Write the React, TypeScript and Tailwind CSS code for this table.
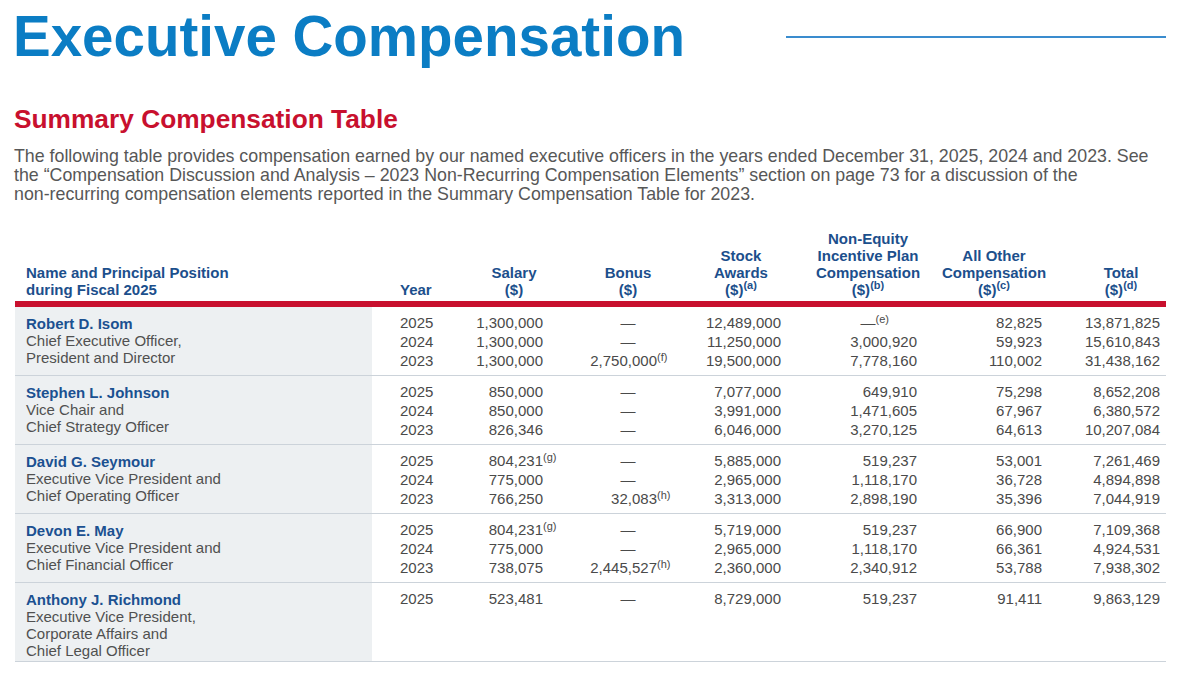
import * as React from "react";

type Val = { v: string; sup?: string };

type Exec = {
  name: string;
  title: string[];
  rows: Val[][];
};

const d = (v: string, sup?: string): Val => ({ v, sup });

const execs: Exec[] = [
  {
    name: "Robert D. Isom",
    title: ["Chief Executive Officer,", "President and Director"],
    rows: [
      [d("2025"), d("1,300,000"), d("—"), d("12,489,000"), d("—", "e"), d("82,825"), d("13,871,825")],
      [d("2024"), d("1,300,000"), d("—"), d("11,250,000"), d("3,000,920"), d("59,923"), d("15,610,843")],
      [d("2023"), d("1,300,000"), d("2,750,000", "f"), d("19,500,000"), d("7,778,160"), d("110,002"), d("31,438,162")],
    ],
  },
  {
    name: "Stephen L. Johnson",
    title: ["Vice Chair and", "Chief Strategy Officer"],
    rows: [
      [d("2025"), d("850,000"), d("—"), d("7,077,000"), d("649,910"), d("75,298"), d("8,652,208")],
      [d("2024"), d("850,000"), d("—"), d("3,991,000"), d("1,471,605"), d("67,967"), d("6,380,572")],
      [d("2023"), d("826,346"), d("—"), d("6,046,000"), d("3,270,125"), d("64,613"), d("10,207,084")],
    ],
  },
  {
    name: "David G. Seymour",
    title: ["Executive Vice President and", "Chief Operating Officer"],
    rows: [
      [d("2025"), d("804,231", "g"), d("—"), d("5,885,000"), d("519,237"), d("53,001"), d("7,261,469")],
      [d("2024"), d("775,000"), d("—"), d("2,965,000"), d("1,118,170"), d("36,728"), d("4,894,898")],
      [d("2023"), d("766,250"), d("32,083", "h"), d("3,313,000"), d("2,898,190"), d("35,396"), d("7,044,919")],
    ],
  },
  {
    name: "Devon E. May",
    title: ["Executive Vice President and", "Chief Financial Officer"],
    rows: [
      [d("2025"), d("804,231", "g"), d("—"), d("5,719,000"), d("519,237"), d("66,900"), d("7,109,368")],
      [d("2024"), d("775,000"), d("—"), d("2,965,000"), d("1,118,170"), d("66,361"), d("4,924,531")],
      [d("2023"), d("738,075"), d("2,445,527", "h"), d("2,360,000"), d("2,340,912"), d("53,788"), d("7,938,302")],
    ],
  },
  {
    name: "Anthony J. Richmond",
    title: ["Executive Vice President,", "Corporate Affairs and", "Chief Legal Officer"],
    rows: [
      [d("2025"), d("523,481"), d("—"), d("8,729,000"), d("519,237"), d("91,411"), d("9,863,129")],
    ],
  },
];

// left padding per value column (year .. total) and right padding for numbers
const colPad = ["pl-[28px]", "", "pl-[34px]", "pl-[23px]", "pl-[21px]", "pl-[14px]", "pl-[26px]"];
const numPad = ["", "pr-[11px]", "pr-[11px]", "pr-[10px]", "pr-[7px]", "pr-[8px]", "pr-[6px]"];

const gridCols = "grid grid-cols-[357px_102px_80px_114px_123px_133px_126px_116px]";

const headers: { lines: string[]; sup?: string }[] = [
  { lines: ["Salary", "($)"] },
  { lines: ["Bonus", "($)"] },
  { lines: ["Stock", "Awards", "($)"], sup: "a" },
  { lines: ["Non-Equity", "Incentive Plan", "Compensation", "($)"], sup: "b" },
  { lines: ["All Other", "Compensation", "($)"], sup: "c" },
  { lines: ["Total", "($)"], sup: "d" },
];

function Cell({ val, col }: { val: Val; col: number }) {
  if (col === 0) return <div>{val.v}</div>;
  const dash = val.v === "—";
  return (
    <div className={dash ? "text-center" : `text-right ${numPad[col]}`}>
      <span className="relative">
        {val.v}
        {val.sup && (
          <sup className="absolute left-full top-0 text-[11px] leading-none">({val.sup})</sup>
        )}
      </span>
    </div>
  );
}

export default function App() {
  return (
    <div className="w-[1200px] h-[683px] bg-white overflow-hidden px-[14px] font-['Liberation_Sans',Arial,sans-serif]">
      <div className="flex items-center justify-between pt-[9px]">
        <h1 className="text-[56.5px] leading-none font-bold text-[#0b7dc4] -ml-[1px]">Executive Compensation</h1>
        <div className="w-[380px] h-[2px] bg-[#3a8cce] mr-[20px]" />
      </div>

      <h2 className="mt-[40px] text-[26.3px] leading-none font-bold text-[#c8102e]">Summary Compensation Table</h2>
      <p className="mt-[15px] text-[17.8px] leading-[19px] text-[#575757]">
        The following table provides compensation earned by our named executive officers in the years ended December 31, 2025, 2024 and 2023. See
        <br />
        the “Compensation Discussion and Analysis – 2023 Non-Recurring Compensation Elements” section on page 73 for a discussion of the
        <br />
        non-recurring compensation elements reported in the Summary Compensation Table for 2023.
      </p>

      <div className="ml-[1px] mt-[26px] w-[1151px] text-[15px]">
        <div className={`${gridCols} pb-[3px] font-bold text-[#1c4f8c] leading-[17px]`}>
          <div className="flex flex-col justify-end pl-[11px]">
            <div>Name and Principal Position</div>
            <div>during Fiscal 2025</div>
          </div>
          <div className={`flex flex-col justify-end ${colPad[0]}`}>
            <div>Year</div>
          </div>
          {headers.map((h, i) => (
            <div key={i} className={`flex flex-col justify-end text-center ${colPad[i + 1]}`}>
              {h.lines.map((l, j) => (
                <div key={j}>
                  {l}
                  {j === h.lines.length - 1 && h.sup && <sup className="text-[11px]">({h.sup})</sup>}
                </div>
              ))}
            </div>
          ))}
        </div>
        <div className="h-[6px] bg-[#c8102e]" />

        {execs.map((e) => (
          <div key={e.name} className={`${gridCols} border-b border-[#ccd3da]`}>
            <div className="bg-[#edf0f2] pl-[11px] pt-[8px] pb-[2px] leading-[17px] text-[#505050]">
              <div className="font-bold text-[#1b5191]">{e.name}</div>
              {e.title.map((t) => (
                <div key={t}>{t}</div>
              ))}
            </div>
            {colPad.map((pad, c) => (
              <div key={c} className={`pt-[6px] pb-[5px] leading-[19px] text-[#4a4a4a] ${pad}`}>
                {e.rows.map((r, ri) => (
                  <Cell key={ri} val={r[c]} col={c} />
                ))}
              </div>
            ))}
          </div>
        ))}
      </div>
    </div>
  );
}
